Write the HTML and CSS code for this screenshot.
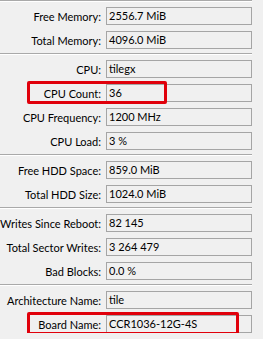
FILE: index.html
```html
<!DOCTYPE html>
<html>
<head>
<meta charset="utf-8">
<link rel="stylesheet" href="styles.css">
</head>
<body>
<div class="panel">
  <div class="sep first"></div>
  <div class="group">
    <div class="row"><span class="label">Free Memory:</span><span class="value">2556.7 MiB</span></div>
    <div class="row"><span class="label">Total Memory:</span><span class="value">4096.0 MiB</span></div>
  </div>
  <div class="sep"></div>
  <div class="group">
    <div class="row"><span class="label">CPU:</span><span class="value">tilegx</span></div>
    <div class="row"><span class="label">CPU Count:</span><span class="value">36</span><span class="mark mark-short"></span></div>
    <div class="row"><span class="label">CPU Frequency:</span><span class="value">1200 MHz</span></div>
    <div class="row"><span class="label">CPU Load:</span><span class="value">3 %</span></div>
  </div>
  <div class="sep"></div>
  <div class="group">
    <div class="row"><span class="label">Free HDD Space:</span><span class="value">859.0 MiB</span></div>
    <div class="row"><span class="label">Total HDD Size:</span><span class="value">1024.0 MiB</span></div>
  </div>
  <div class="sep"></div>
  <div class="group">
    <div class="row"><span class="label">Writes Since Reboot:</span><span class="value">82 145</span></div>
    <div class="row"><span class="label">Total Sector Writes:</span><span class="value">3 264 479</span></div>
    <div class="row"><span class="label">Bad Blocks:</span><span class="value">0.0 %</span></div>
  </div>
  <div class="sep"></div>
  <div class="group">
    <div class="row"><span class="label">Architecture Name:</span><span class="value">tile</span></div>
    <div class="row"><span class="label">Board Name:</span><span class="value">CCR1036-12G-4S</span><span class="mark mark-long"></span></div>
  </div>
</div>
</body>
</html>
```
FILE: styles.css
```css
html, body {
  margin: 0;
  padding: 0;
  background: #f0f0f0;
  overflow: hidden;
}
.panel {
  width: 252px;
  display: flex;
  flex-direction: column;
  font-family: Lato, "Liberation Sans", sans-serif;
  font-size: 11px;
  color: #000;
}
.sep {
  height: 0;
  border-top: 1px solid #a9a9a9;
  border-bottom: 1px solid #ffffff;
  margin: 4px 0 5px 0;
}
.sep.first {
  margin: 0 0 5px 0;
}
.group {
  display: flex;
  flex-direction: column;
  gap: 6px;
}
.row {
  position: relative;
  display: flex;
  align-items: center;
  height: 18px;
}
.label {
  width: 101px;
  flex: none;
  text-align: right;
  white-space: nowrap;
  padding-right: 5px;
}
.value {
  flex: 1;
  height: 18px;
  box-sizing: border-box;
  border: 1px solid #a5a5a5;
  background: #f0f0f0;
  padding: 0 2px;
  line-height: 16px;
  white-space: nowrap;
}
.mark {
  position: absolute;
  top: -3px;
  left: 27px;
  height: 23px;
  box-sizing: border-box;
  border: 3px solid #e0000b;
  border-radius: 2px;
}
.mark-short { width: 140px; }
.mark-long { width: 212px; }
```
